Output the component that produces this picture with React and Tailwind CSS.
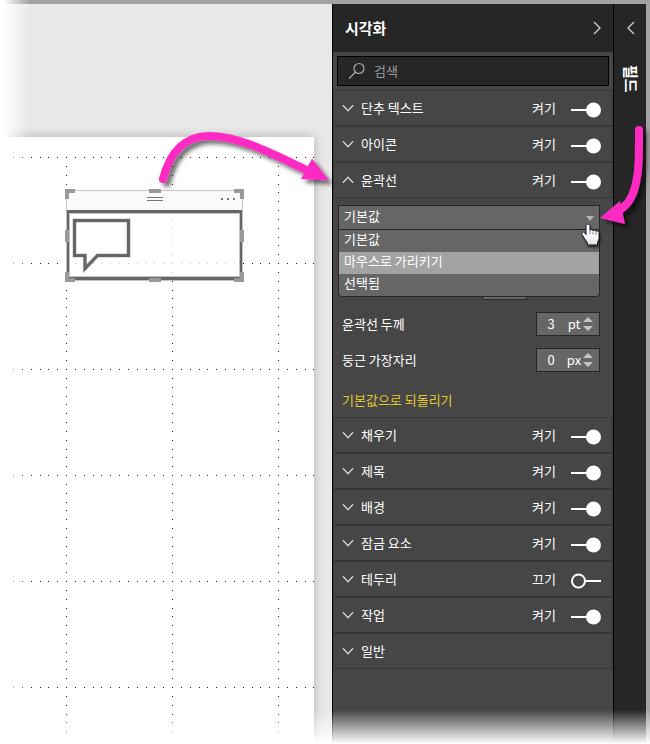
import { useState } from "react";

const MAGENTA = "#ff2cc4";

function Chevron({ className, d, width = 14, height = 14, viewBox = "0 0 14 14" }) {
  return (
    <svg className={className} width={width} height={height} viewBox={viewBox} fill="none" stroke="currentColor" strokeWidth="1.3" aria-hidden="true">
      <path d={d} />
    </svg>
  );
}

function GridDots() {
  const dots = [];
  const step = 106 / 12;
  for (const line of [20, 126, 232, 338, 444, 550]) {
    for (let k = -7; k <= 28; k++) dots.push([62 + Math.round(k * step), line]);
  }
  for (const line of [62, 168, 274]) {
    for (let k = 1; k <= 65; k++) {
      if (k % 12 !== 0) dots.push([line, 20 + Math.round(k * step)]);
    }
  }
  return (
    <svg className="absolute inset-0 h-full w-full" shapeRendering="crispEdges" aria-hidden="true">
      {dots.map(([x, y]) => (
        <rect key={`${x}-${y}`} x={x} y={y} width="1" height="1" fill="#1c1c1c" />
      ))}
    </svg>
  );
}

function ButtonVisual() {
  return (
    <div className="absolute top-[52px] left-[61px] h-[93px] w-[179px]">
      <svg width="179" height="93" viewBox="0 0 179 93" fill="none" role="img" aria-label="단추">
        <rect x="1" y="1" width="177" height="91" fill="#fff" fillOpacity="0.75" />
        <rect x="1" y="1" width="177" height="21" fill="#fafafa" />
        <rect x="1.5" y="1.5" width="176" height="90" stroke="#c4c4c4" />
        <rect x="4.5" y="24.5" width="170" height="63" stroke="#c4c4c4" />
        <path d="M2 21h175v70H2zM4 24v64h171V24z" fill="#666" fillRule="evenodd" />
        <path d="M82 8.5h16M82 11.5h16" stroke="#777" />
        <path d="M156 10h2M162 10h2M168 10h2" stroke="#777" strokeWidth="2" />
        <path d="M9.5 31.5h54v35h-31L20 79.5v-13H9.5z" stroke="#c4c4c4" strokeWidth="4" />
        <path d="M9.5 31.5h54v35h-31L20 79.5v-13H9.5z" stroke="#666" strokeWidth="3" />
        <path
          d="M0 0h10v4H4v6H0zM169 0h10v10h-4V4h-6zM0 83h4v6h6v4H0zM175 83h4v10h-10v-4h6zM84 0h12v4H84zM84 89h12v4H84zM0 41h4v12H0zM175 41h4v12h-4z"
          fill="#999"
        />
      </svg>
    </div>
  );
}

function Toggle({ label, on }) {
  const [checked, setChecked] = useState(on);
  return (
    <label className="flex items-center gap-[15px]">
      <span>{checked ? "켜기" : "끄기"}</span>
      <span className="relative mt-[3px] block h-4 w-[31px]">
        <input
          type="checkbox"
          aria-label={label}
          checked={checked}
          onChange={(e) => setChecked(e.target.checked)}
          className="absolute inset-0 h-full w-full opacity-0"
        />
        <svg className="block" width="31" height="16" viewBox="0 0 31 16" fill="none" aria-hidden="true">
          {checked ? (
            <>
              <path d="M0 8h16" stroke="#fff" strokeWidth="2" />
              <circle cx="22.5" cy="8" r="7.5" fill="#fff" />
            </>
          ) : (
            <>
              <circle cx="7.5" cy="8" r="6.5" stroke="#fff" strokeWidth="2" />
              <path d="M14 8h16" stroke="#fff" strokeWidth="2" />
            </>
          )}
        </svg>
      </span>
    </label>
  );
}

function SectionRow({ label, on, open }) {
  return (
    <div className="flex h-9 items-center border border-[#383838] pr-[10px] pl-2 text-white">
      <button type="button" aria-expanded={!!open} className="flex flex-1 items-center gap-[7px] text-left">
        <Chevron className="text-[#d8d8d8]" d={open ? "M1 10l5.5-6 5.5 6" : "M1 4l5.5 6 5.5-6"} width={12} viewBox="0 0 13 14" />
        <span>{label}</span>
      </button>
      {on !== undefined && <Toggle label={label} on={on} />}
    </div>
  );
}

function NumberField({ id, label, value, unit }) {
  return (
    <div className="flex h-9 items-center justify-between">
      <label htmlFor={id} className="pl-1">{label}</label>
      <div className="flex h-6 w-16 items-center border border-[#262626] bg-[#666]">
        <input id={id} type="text" inputMode="numeric" defaultValue={value} className="w-7 bg-transparent text-center text-white outline-none" />
        <span className="w-[18px] text-center">{unit}</span>
        <svg width="10" height="16" viewBox="0 0 10 16" fill="#c4c4c4" aria-hidden="true">
          <path d="M0 6l5-5 5 5zM0 10h10l-5 5z" />
        </svg>
      </div>
    </div>
  );
}

function StateSelect() {
  return (
    <div className="relative">
      <select
        aria-label="상태"
        defaultValue="기본값"
        className="block h-[25px] w-full appearance-none border border-[#262626] bg-[#666] px-[5px] pb-1 text-white outline-none"
      >
        <option>기본값</option>
        <option>마우스로 가리키기</option>
        <option>선택됨</option>
      </select>
      <svg className="absolute top-[11px] right-[6px]" width="8" height="5" viewBox="0 0 8 5" fill="#b0b0b0" aria-hidden="true">
        <path d="M0 0h8L4 5z" />
      </svg>
      <ul className="absolute top-6 left-0 z-10 w-full rounded-b border border-[#262626] bg-[#666] leading-[18px]" role="listbox">
        <li role="option" aria-selected="true" className="px-[5px] pb-1">기본값</li>
        <li role="option" aria-selected="false" className="bg-[#a3a3a3] px-[5px] pb-1">마우스로 가리키기</li>
        <li role="option" aria-selected="false" className="rounded-b px-[5px] pb-1">선택됨</li>
      </ul>
    </div>
  );
}

function OutlineSettings() {
  return (
    <div className="pt-[7px] pr-[13px] pl-[5px] text-white">
      <StateSelect />
      <div className="flex h-[76px] items-end justify-end pr-[73px] pb-[6px]">
        <button type="button" aria-label="색" className="h-6 w-[45px] border border-[#262626] bg-[#666]" />
      </div>
      <NumberField id="weight" label="윤곽선 두께" value="3" unit="pt" />
      <NumberField id="corners" label="둥근 가장자리" value="0" unit="px" />
      <button type="button" className="flex h-[39px] items-center pt-[5px] pl-1 text-[#e3c92c]">기본값으로 되돌리기</button>
    </div>
  );
}

function Canvas() {
  return (
    <main className="min-w-0 flex-1 overflow-hidden bg-[#e8e8e8] pt-[133px] pr-[18px] pl-1">
      <div className="relative h-[607px] bg-white shadow-[0_0_10px_rgba(0,0,0,0.25)]">
        <GridDots />
        <ButtonVisual />
      </div>
    </main>
  );
}

function VisualizationsPane() {
  return (
    <aside className="w-[282px] shrink-0 border-x border-black bg-[#464646]">
      <header className="flex h-12 items-center justify-between bg-[#262626] px-3 text-white">
        <h1 className="text-[15px] font-bold">시각화</h1>
        <button type="button" aria-label="창 축소">
          <Chevron className="text-[#d0d0d0]" d="M1 1l6 6-6 6" width={8} viewBox="0 0 8 14" />
        </button>
      </header>
      <label className="m-1 flex h-[30px] items-center gap-2 border border-black bg-[#262626] pl-[10px]">
        <svg width="18" height="18" viewBox="0 0 18 18" fill="none" stroke="#a8a8a8" strokeWidth="1.2" aria-hidden="true">
          <circle cx="11" cy="6.5" r="5" />
          <path d="M7.5 10L1 16.5" />
        </svg>
        <input type="search" placeholder="검색" aria-label="검색" className="min-w-0 flex-1 bg-transparent text-[13px] text-white outline-none placeholder:text-[#999]" />
      </label>
      <SectionRow label="단추 텍스트" on={true} />
      <SectionRow label="아이콘" on={true} />
      <SectionRow label="윤곽선" on={true} open />
      <OutlineSettings />
      <SectionRow label="채우기" on={true} />
      <SectionRow label="제목" on={true} />
      <SectionRow label="배경" on={true} />
      <SectionRow label="잠금 요소" on={true} />
      <SectionRow label="테두리" on={false} />
      <SectionRow label="작업" on={true} />
      <SectionRow label="일반" />
    </aside>
  );
}

function FieldsPane() {
  return (
    <aside className="flex w-8 shrink-0 flex-col items-center bg-[#262626] pl-[2px] text-white">
      <button type="button" aria-label="창 확장" className="flex h-12 items-center">
        <Chevron className="text-[#d0d0d0]" d="M7 1L1 7l6 6" width={8} viewBox="0 0 8 14" />
      </button>
      <h2 className="mt-[13px] text-[15px] font-bold [text-orientation:sideways] [writing-mode:vertical-rl]">필드</h2>
    </aside>
  );
}

function Annotations() {
  return (
    <svg className="pointer-events-none absolute top-0 right-0 z-20" width="650" height="300" viewBox="0 0 650 300" fill="none" aria-hidden="true">
      <defs>
        <filter id="soft" x="-20%" y="-20%" width="150%" height="150%">
          <feDropShadow dx="4" dy="4" stdDeviation="2" floodColor="#000" floodOpacity="0.55" />
        </filter>
        <filter id="cursor" x="-20%" y="-20%" width="160%" height="160%">
          <feDropShadow dx="1" dy="2" stdDeviation="1" floodColor="#000" floodOpacity="0.6" />
        </filter>
        <linearGradient id="glove" x1="0" y1="0" x2="0" y2="1">
          <stop offset="0.5" stopColor="#fff" />
          <stop offset="1" stopColor="#ddd" />
        </linearGradient>
      </defs>
      <g filter="url(#soft)">
        <path d="M163 179C170 151 186 136 209 136C240 136 272 154 309 171" stroke={MAGENTA} strokeWidth="8" strokeLinecap="round" />
        <path d="M312 158.5L301 179L329 180.5z" fill={MAGENTA} />
      </g>
      <g filter="url(#soft)">
        <path d="M639 130C639 158 639 172 635 187C632 199 625 208 616 212" stroke={MAGENTA} strokeWidth="8" strokeLinecap="round" />
        <path d="M620 201L625 224L600 218z" fill={MAGENTA} />
      </g>
      <g filter="url(#cursor)">
        <path
          d="M586 226c0-2.500 4-2.500 4 0v4.500c.5-1.500 3-1.300 3 .4.500-1.200 3-1 3 .7.500-1 3-.7 3 1v6.400l-1.500 3.500v2.500h-10v-2l-3-4.500-2.500-4c-.8-2 1.500-3.200 2.700-1.800l1.300 2z"
          fill="url(#glove)"
          stroke="#1c1c2c"
          strokeWidth="1"
        />
        <path d="M590 231v3M593 231.500v3M596 232v3" stroke="#1c1c2c" strokeWidth="0.6" />
      </g>
    </svg>
  );
}

export default function App() {
  return (
    <div className="relative overflow-hidden bg-white pb-1 font-['Noto_Sans_CJK_KR','Noto_Sans',sans-serif] text-[13px] leading-5">
      <div className="flex min-h-[740px] border-t-4 border-r-4 border-[#a2a2a2]">
        <Canvas />
        <VisualizationsPane />
        <FieldsPane />
      </div>
      <Annotations />
      <div className="pointer-events-none absolute inset-y-0 left-0 z-30 w-[30px] bg-linear-to-r from-white from-10% to-transparent" />
      <div className="pointer-events-none absolute inset-x-0 bottom-1 z-30 h-[34px] bg-linear-to-t from-white to-transparent" />
    </div>
  );
}
